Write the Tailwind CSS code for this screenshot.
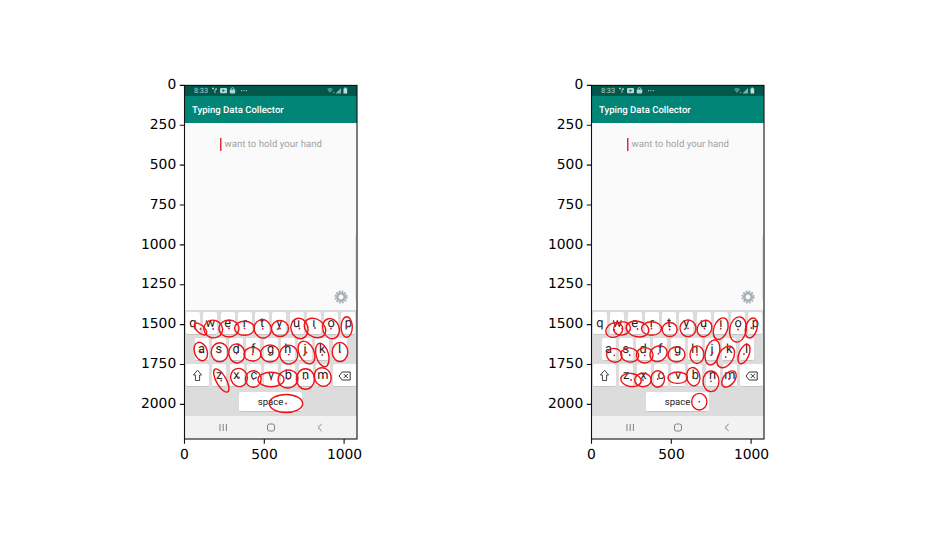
<!DOCTYPE html>
<html lang="en">
<head>
<meta charset="utf-8">
<title>Typing Data Collector</title>
<script src="https://cdn.jsdelivr.net/npm/@tailwindcss/browser@4"></script>
</head>
<body class="bg-white overflow-hidden">
<main class="flex w-[943px] h-[555px] pl-[124px] pt-[65px] gap-[174px]" id="plots"></main>

<template id="plot">
  <figure class="flex w-[233px] h-[410px] font-['DejaVu_Sans',sans-serif] text-[13.850px] text-black [text-rendering:geometricPrecision]">
    <div class="w-[60px] shrink-0 pt-[1.200px]" data-yaxis></div>
    <div class="w-[173px] shrink-0 pt-[20px]">
      <div class="relative flex flex-col w-[173px] h-[354px] bg-[#fafafa] font-[Roboto,sans-serif]">
        <div class="h-[11px] shrink-0 bg-[#00574b] flex items-center pl-[10px] pr-[9px] text-[7.300px] text-[#b5d0cb]">
          <span class="w-[17px] leading-none">8:33</span>
          <svg class="w-[40px] h-[9px]" viewBox="0 0 40 9" fill="#b5d5cf">
            <path d="M1 2.500h2M2 1.500v2M4 7V4q0-1 2-1M5 2v2" fill="none" stroke="#b5d5cf" stroke-width=".9"/>
            <rect x="9" y="2" width="7" height="5.200" rx="1"/><path d="M11.600 3.200l2.400 1.400-2.400 1.400z" fill="#00574b"/>
            <path d="M18.800 3.500h5.400v3q0 1-1 1h-3.400q-1 0-1-1z"/><path d="M20 3.400q0-1.800 1.500-1.800T23 3.400" fill="none" stroke="#b5d5cf" stroke-width=".9"/>
            <circle cx="30.600" cy="4.700" r=".6"/><circle cx="33" cy="4.700" r=".6"/><circle cx="35.400" cy="4.700" r=".6"/>
          </svg>
          <svg class="w-[22px] h-[9px] ml-auto" viewBox="0 0 22 9" fill="#7fb0a7">
            <path d="M1 3q3-2 6 0L4 7z" opacity=".65"/><circle cx="7.500" cy="6.400" r=".7"/><path d="M9.500 7.500L15 2v5.500z"/>
            <path d="M17.500 2.500h1v-1h1.700v1h1v5h-3.700z" fill="#c3dcd7"/>
          </svg>
        </div>
        <div class="h-[27px] shrink-0 bg-[#008577] flex items-center pt-[3px] pl-[8px] text-white text-[9.570px] font-medium whitespace-nowrap">Typing Data Collector</div>
        <div class="h-[187px] shrink-0 flex flex-col justify-between">
          <div class="flex items-center pt-[14px] pl-[36px] text-[9.650px] leading-[14px] text-[#a2a2a2] whitespace-nowrap">
            <span class="w-px h-[13px] mr-[3.500px]" data-caret></span><span class="pt-px">want to hold your hand</span>
          </div>
          <div class="flex items-end justify-end pr-px h-[75px]">
            <svg class="w-[14px] h-[14px] mb-[6px] mr-[7px]" viewBox="-7 -7 14 14"><circle r="5.700" fill="none" stroke="#a6adb0" stroke-width="1.700" stroke-dasharray="1.790 1.190"/><circle r="3.700" fill="none" stroke="#a9b0b3" stroke-width="2.600"/></svg>
            <span class="w-px h-[65px] mb-[10px] bg-[#e2e2e2]"></span>
          </div>
        </div>
        <div class="h-[106px] shrink-0 bg-[#dcdcdc] flex flex-col text-[12.800px] leading-none text-[#222]" data-keyboard></div>
        <div class="h-[23px] shrink-0 bg-[#f2f2f2]">
          <svg class="w-[173px] h-[23px]" viewBox="0 0 173 23" fill="none" stroke="#808080" stroke-width="1"><path d="M36 8v7M39.200 8v7M42.400 8v7M137.700 8l-3.700 3.500 3.700 3.500"/><rect x="83.500" y="8" width="7" height="7" rx="2"/></svg>
        </div>
        <svg class="absolute left-0 top-0 w-[173px] h-[354px] overflow-visible" viewBox="184 85 173 354" data-marks></svg>
      </div>
      <div class="flex pt-[8px] -ml-[39.500px] w-[240px] leading-[16px]">
        <span class="w-[80px] shrink-0 text-center">0</span>
        <span class="w-[80px] shrink-0 text-center">500</span>
        <span class="w-[80px] shrink-0 text-center">1000</span>
      </div>
    </div>
  </figure>
</template>

<script>
// Each row: centre x, centre y, radius x, radius y, rotation in degrees
const plots = [
  { caret: '#d8343b', marks: [
    [200.500,329,7.800,3.700,43],[213.200,329,9.500,8.800,20],[229,328.500,10,8.500,0],[244.500,328.300,10,7,0],[262.700,328.800,8.500,9.300,-20],
    [280,328.500,8.500,8,0],[299.500,328.500,8.500,10.300,-15],[315,328,11.500,8.800,35],[331,328.700,8.200,10.300,-20],[346.700,327,5.600,10.200,0],
    [200.800,351.500,6.300,9.500,-20],[219.700,352.300,8.500,9.600,0],[236.800,353.500,8,9.500,-10],[252.500,354.200,8.500,6.800,0],[270,353.500,9.300,8.500,0],
    [288.800,354.600,9,9.500,-10],[306.500,352.500,7.500,12,-25],[322.300,355,6.200,12,-15],[340,352,7.800,9.600,0],
    [221.300,380.500,5,13,-29],[239,377.500,8.300,9.200,-20],[253.300,379,7.800,8.300,0],[271,379.500,13,7.300,0],[288,379,10,9,-10],[305.500,379,9,10.200,0],[322.700,377,8.300,9.500,-25],
    [286,403.500,16.700,9,0]] },
  { caret: '#ea2440', marks: [
    [207.300,330,8.800,7,-25],[215,328.500,8.500,6.500,-10],[230.500,329,11.500,7.700,12],[244.500,328.500,10,6.700,0],[262.700,329.500,7.500,7,0],
    [281,328.300,8,8.300,-10],[297.500,328.500,7,8.500,30],[313.700,328.700,6.800,11.200,20],[331,329.500,8.300,12.700,10],[344.300,328,5.700,10.200,15],
    [207.300,355.300,7.800,6.800,20],[222.700,355,9,7,10],[237.700,355.300,8.300,7.700,0],[251.500,353.700,9,7.500,-30],[269.500,354.500,8.500,7.500,0],
    [290,354.700,7,8.800,0],[305.500,352.500,7,12.700,14],[318.700,357,7.500,11.700,32],[337,354,5,10.300,22],
    [224,380,10.300,6.500,8],[236,380,8.300,6.800,0],[250.700,379,6.800,8.200,0],[270.700,377.700,9.800,5.700,0],[286.300,376.700,6.600,9.200,-10],[304,381.300,8,10.300,0],[322,379,5.700,9.300,38],
    [292.300,401.700,7.600,8.300,0]] }
];

const yLabel = n => `<div class="h-[39.87px] flex items-center justify-end leading-none pr-[7.800px]">${n}</div>`;
const key = c => `<span class="w-[14px] h-[23px] shrink-0 rounded-[2px] bg-white border-b border-[#c4c4c4] flex items-center justify-center pt-[3px]">${c}</span>`;
const row = s => [...s].map(key).join('');
const shift = `<span class="w-[23px] h-[23px] shrink-0 rounded-[2px] bg-white border-b border-[#c4c4c4] flex items-center justify-center pt-px"><svg class="w-[11px] h-[13px]" viewBox="0 0 11 13" fill="none" stroke="#444" stroke-width="1"><path d="M5.500 1.200L1.400 6h2v5.500h4.200V6h2z"/></svg></span>`;
const erase = `<span class="w-[23px] h-[23px] shrink-0 rounded-[2px] bg-white border-b border-[#c4c4c4] flex items-center justify-center pt-px"><svg class="w-[13px] h-[10px]" viewBox="0 0 13 10" fill="none" stroke="#333" stroke-width="1"><path d="M4.200 1h8v8h-8L1 5zM5.800 3l4 4M9.800 3l-4 4"/></svg></span>`;
const keyboard = `
  <div class="flex pt-[2px] pl-[2px] gap-[3.270px]">${row('qwertyuiop')}</div>
  <div class="flex pt-[3px] pl-[10.500px] gap-[3.270px]">${row('asdfghjkl')}</div>
  <div class="flex pt-[3px] pl-[2px] gap-[3.270px]">${shift}${row('zxcvbnm')}${erase}</div>
  <div class="flex pt-[5px] pl-[55px]"><span class="w-[63px] h-[20px] rounded-[2px] bg-white border-b border-[#c4c4c4] flex items-center justify-center pt-[3px] text-[9.500px]">space</span></div>`;

for (const p of plots) {
  const el = document.getElementById('plot').content.cloneNode(true);
  el.querySelector('[data-yaxis]').innerHTML = [0,250,500,750,1000,1250,1500,1750,2000].map(yLabel).join('');
  el.querySelector('[data-keyboard]').innerHTML = keyboard;
  const caret = el.querySelector('[data-caret]');
  caret.style.background = p.caret;
  caret.style.boxShadow = `0.5px 0 0 ${p.caret}`;
  let ticks = '';
  for (let i = 0; i < 9; i++) ticks += `M179.800 ${85.4 + i * 39.87}h4.700`;
  for (let i = 0; i < 3; i++) ticks += `M${184.500 + i * 79.8} 439v4.700`;
  el.querySelector('[data-marks]').innerHTML =
    `<g fill="none" stroke="#ee1216" stroke-width="1.400">` +
    p.marks.map(([x, y, a, b, r]) => `<ellipse cx="${x}" cy="${y}" rx="${a}" ry="${b}" transform="rotate(${r} ${x} ${y})"/>`).join('') + `</g>` +
    `<g fill="#e0181c">` + p.marks.map(([x, y]) => `<circle cx="${x}" cy="${y}" r=".9"/>`).join('') + `</g>` +
    `<rect x="184.500" y="85.400" width="172.500" height="353.600" fill="none" stroke="#111" stroke-width="1.100"/><path d="${ticks}" stroke="#111" stroke-width="1.100"/>`;
  document.getElementById('plots').appendChild(el);
}
</script>
</body>
</html>
